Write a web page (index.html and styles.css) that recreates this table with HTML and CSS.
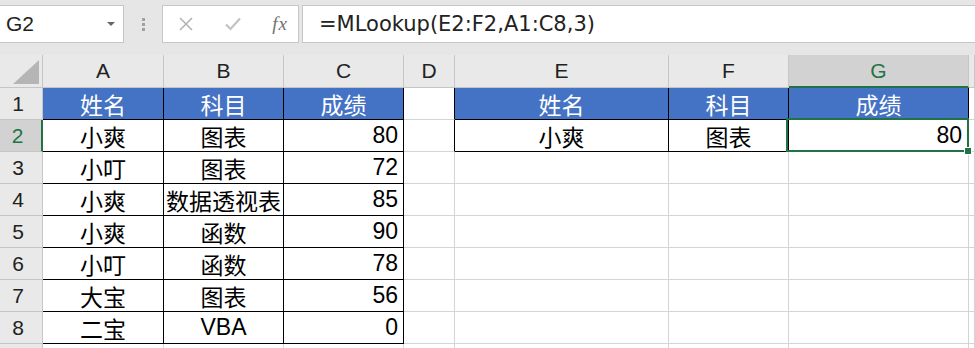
FILE: index.html
```html
<!DOCTYPE html>
<html>
<head>
    <title>MLookup</title>
    <link rel="stylesheet" href="styles.css">
</head>
<body>
    <div class="toolbar">
        <div class="namebox">
            <span class="ref">G2</span>
            <span class="caret"></span>
        </div>
        <div class="grip"><i></i><i></i><i></i></div>
        <div class="fbuttons">
            <svg class="btn" width="14" height="14" viewBox="0 0 14 14"><path d="M1 1L13 13M13 1L1 13" stroke="#b3b3b3" stroke-width="1.6" fill="none"/></svg>
            <svg class="btn" width="16" height="14" viewBox="0 0 16 14"><path d="M1 7.5L5.5 12L15 1.5" stroke="#c2c2c2" stroke-width="2.2" fill="none"/></svg>
            <span class="fx">fx</span>
        </div>
        <div class="formula">=MLookup(E2:F2,A1:C8,3)</div>
    </div>

    <div class="sheet">
        <!-- column headers -->
        <div class="corner"><span class="tri"></span></div>
        <div class="colhead">A</div>
        <div class="colhead">B</div>
        <div class="colhead">C</div>
        <div class="colhead">D</div>
        <div class="colhead">E</div>
        <div class="colhead">F</div>
        <div class="colhead active">G</div>
        <div class="colhead"></div>

        <!-- row 1 -->
        <div class="rowhead">1</div>
        <div class="cell hd">姓名</div>
        <div class="cell hd">科目</div>
        <div class="cell hd">成绩</div>
        <div class="cell edge"></div>
        <div class="cell hd">姓名</div>
        <div class="cell hd">科目</div>
        <div class="cell hd">成绩</div>
        <div class="cell"></div>

        <!-- row 2 -->
        <div class="rowhead active">2</div>
        <div class="cell tb ctr">小爽</div>
        <div class="cell tb ctr">图表</div>
        <div class="cell tb num">80</div>
        <div class="cell edge"></div>
        <div class="cell tb ctr">小爽</div>
        <div class="cell tb ctr">图表</div>
        <div class="cell num sel">80</div>
        <div class="cell"></div>

        <!-- row 3 -->
        <div class="rowhead">3</div>
        <div class="cell tb ctr">小叮</div>
        <div class="cell tb ctr">图表</div>
        <div class="cell tb num">72</div>
        <div class="cell"></div>
        <div class="cell"></div>
        <div class="cell"></div>
        <div class="cell"></div>
        <div class="cell"></div>

        <!-- row 4 -->
        <div class="rowhead">4</div>
        <div class="cell tb ctr">小爽</div>
        <div class="cell tb ctr">数据透视表</div>
        <div class="cell tb num">85</div>
        <div class="cell"></div>
        <div class="cell"></div>
        <div class="cell"></div>
        <div class="cell"></div>
        <div class="cell"></div>

        <!-- row 5 -->
        <div class="rowhead">5</div>
        <div class="cell tb ctr">小爽</div>
        <div class="cell tb ctr">函数</div>
        <div class="cell tb num">90</div>
        <div class="cell"></div>
        <div class="cell"></div>
        <div class="cell"></div>
        <div class="cell"></div>
        <div class="cell"></div>

        <!-- row 6 -->
        <div class="rowhead">6</div>
        <div class="cell tb ctr">小叮</div>
        <div class="cell tb ctr">函数</div>
        <div class="cell tb num">78</div>
        <div class="cell"></div>
        <div class="cell"></div>
        <div class="cell"></div>
        <div class="cell"></div>
        <div class="cell"></div>

        <!-- row 7 -->
        <div class="rowhead">7</div>
        <div class="cell tb ctr">大宝</div>
        <div class="cell tb ctr">图表</div>
        <div class="cell tb num">56</div>
        <div class="cell"></div>
        <div class="cell"></div>
        <div class="cell"></div>
        <div class="cell"></div>
        <div class="cell"></div>

        <!-- row 8 -->
        <div class="rowhead">8</div>
        <div class="cell tb ctr">二宝</div>
        <div class="cell tb ctr">VBA</div>
        <div class="cell tb num">0</div>
        <div class="cell"></div>
        <div class="cell"></div>
        <div class="cell"></div>
        <div class="cell"></div>
        <div class="cell"></div>

        <!-- top sliver of the next row -->
        <div class="rowhead short"></div>
        <div class="cell short"></div>
        <div class="cell short"></div>
        <div class="cell short"></div>
        <div class="cell short"></div>
        <div class="cell short"></div>
        <div class="cell short"></div>
        <div class="cell short"></div>
        <div class="cell short"></div>
    </div>
</body>
</html>
```

FILE: styles.css
```css
body {
    margin: 0;
    background: #fff;
    font-family: "Liberation Sans", "Noto Sans CJK SC", sans-serif;
    overflow: hidden;
    height: 348px;
}

/* name box + formula bar */
.toolbar {
    display: flex;
    align-items: stretch;
    height: 55px;
    padding-top: 5px;
    box-sizing: border-box;
    background: #e6e6e6;
}

.namebox {
    width: 124px;
    height: 38px;
    box-sizing: border-box;
    background: #fff;
    border: 1px solid #c6c6c6;
    border-left: none;
    display: flex;
    align-items: center;
    justify-content: space-between;
    padding: 0 8px 0 6px;
}

.ref {
    font-size: 21px;
    color: #222;
}

.caret {
    width: 0;
    height: 0;
    border-left: 4px solid transparent;
    border-right: 4px solid transparent;
    border-top: 4px solid #666;
}

.grip {
    width: 38px;
    height: 38px;
    display: flex;
    flex-direction: column;
    align-items: center;
    justify-content: center;
    gap: 2px;
}

.grip i {
    display: block;
    width: 3px;
    height: 3px;
    background: #a0a0a0;
}

.fbuttons {
    width: 137px;
    height: 38px;
    box-sizing: border-box;
    background: #fff;
    border: 1px solid #c6c6c6;
    display: flex;
    align-items: center;
    justify-content: space-between;
    padding: 0 10px 0 16px;
}

.fx {
    font-family: "Liberation Serif", serif;
    font-style: italic;
    font-size: 19px;
    color: #707070;
    letter-spacing: 1px;
}

.formula {
    flex: 1;
    height: 38px;
    margin-left: 3px;
    margin-right: -2px;
    box-sizing: border-box;
    background: #fff;
    border: 1px solid #c6c6c6;
    padding-left: 16px;
    font-family: "DejaVu Sans", sans-serif;
    font-size: 21px;
    line-height: 36px;
    color: #222;
}

/* worksheet grid: header row, eight data rows, and the top of row 9 */
.sheet {
    display: grid;
    grid-template-columns: 43px 121px 120px 120px 51px 214px 120px 180px 1fr;
    grid-template-rows: 33px repeat(8, 32px) 4px;
}

.corner,
.colhead,
.rowhead {
    background: #e9e9e9;
    border-right: 1px solid #c6c6c6;
    border-bottom: 1px solid #c6c6c6;
    box-sizing: border-box;
    font-size: 21px;
    color: #222;
    display: flex;
    align-items: center;
    justify-content: center;
}

.corner {
    position: relative;
}

.tri {
    position: absolute;
    right: 3px;
    bottom: 3px;
    width: 0;
    height: 0;
    border-left: 26px solid transparent;
    border-bottom: 24px solid #b5b5b5;
}

.rowhead {
    padding-right: 6px;
}

.colhead.active {
    background: #d2d2d2;
    color: #217346;
    border-bottom: 2px solid #217346;
}

.rowhead.active {
    background: #d2d2d2;
    color: #217346;
    border-right: 2px solid #217346;
}

.cell {
    border-right: 1px solid #d4d4d4;
    border-bottom: 1px solid #d4d4d4;
    box-sizing: border-box;
    font-size: 23px;
    color: #000;
    display: flex;
    align-items: center;
    white-space: nowrap;
}

.short {
    border-bottom: none;
}

.hd {
    background: #4472c4;
    color: #fff;
    justify-content: center;
    border-right-color: #000;
    border-bottom-color: #000;
}

.tb {
    border-right-color: #000;
    border-bottom-color: #000;
}

.edge {
    border-right-color: #000;
}

.ctr {
    justify-content: center;
}

.num {
    justify-content: flex-end;
    padding-right: 5px;
}

/* active cell outline with fill handle */
.sel {
    position: relative;
    padding-right: 6px;
}

.sel::after {
    content: "";
    position: absolute;
    top: -2px;
    left: -3px;
    right: -1px;
    bottom: -1px;
    border: 2px solid #217346;
}

.sel::before {
    content: "";
    position: absolute;
    right: -4px;
    bottom: -4px;
    width: 6px;
    height: 6px;
    background: #217346;
    border: 1px solid #fff;
    z-index: 1;
}
```
